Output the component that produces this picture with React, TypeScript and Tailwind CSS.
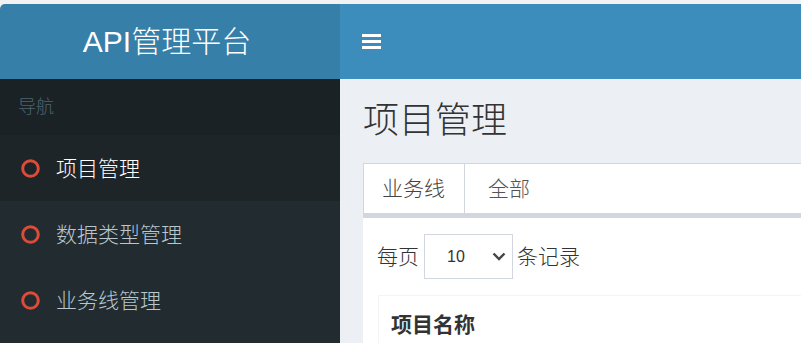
import React from "react";

const cjk = { fontFamily: '"Liberation Sans", "Noto Sans CJK SC", sans-serif' };

function CircleIcon() {
  return (
    <svg width="19" height="19" viewBox="0 0 19 19" className="shrink-0">
      <circle cx="9.5" cy="9.5" r="7.8" fill="none" stroke="#dd4b39" strokeWidth="3" />
    </svg>
  );
}

function MenuItem({ label, active }: { label: string; active?: boolean }) {
  return (
    <div
      className={`h-[66px] flex items-center pl-[21px] ${active ? "bg-[#1e2529] text-white" : "bg-[#222b30] text-[#b8c7ce]"}`}
    >
      <CircleIcon />
      <span className="ml-[16px] text-[21px] leading-none">{label}</span>
    </div>
  );
}

export default function App() {
  return (
    <div className="w-[801px] h-[343px] overflow-hidden bg-[#f2f2f2] pt-[4px] font-light" style={cjk}>
      <div className="flex h-[75px]">
        <div className="w-[340px] bg-[#367fa9] rounded-tl-[5px] flex items-center justify-center pr-[6px] text-white text-[30px] leading-none">
          API管理平台
        </div>
        <div className="flex-1 bg-[#3c8dbc] flex items-center pl-[22px]">
          <div className="flex flex-col gap-[3px] w-[19px] mt-[-1px]">
            <div className="h-[3px] bg-white" />
            <div className="h-[3px] bg-white" />
            <div className="h-[3px] bg-white" />
          </div>
        </div>
      </div>
      <div className="flex h-[264px]">
        <div className="w-[340px] bg-[#222b30] shrink-0">
          <div className="h-[56px] bg-[#1b2226] flex items-center pl-[18px] text-[18px] text-[#4b646f]">导航</div>
          <MenuItem label="项目管理" active />
          <MenuItem label="数据类型管理" />
          <MenuItem label="业务线管理" />
        </div>
        <div className="flex-1 bg-[#ecf0f5] pl-[23px] pt-[22px]">
          <h1 className="text-[36px] leading-[40px] text-[#333]">项目管理</h1>
          <div className="mt-[22px] bg-white">
            <div className="flex h-[50px] border-t border-l border-[#d2d6de] text-[21px]">
              <div className="w-[101px] border-r border-[#d2d6de] flex items-center pl-[18px] text-[#444]">业务线</div>
              <div className="flex items-center pl-[23px] text-[#555]">全部</div>
            </div>
            <div className="h-[5px] bg-[#d2d6de]" />
            <div className="pl-[14px] pt-[16px] h-[200px]">
              <div className="flex items-center text-[21px] text-[#333]">
                <span>每页</span>
                <div className="ml-[5px] w-[89px] h-[45px] border border-[#d2d6de] flex items-center pl-[22px] pr-[6px] justify-between">
                  <span className="text-[16px] text-[#333] font-normal" style={{ fontFamily: '"Liberation Sans", sans-serif' }}>10</span>
                  <svg width="14" height="9" viewBox="0 0 14 9">
                    <polyline points="1.5,1.5 7,7 12.5,1.5" fill="none" stroke="#444" strokeWidth="2.4" />
                  </svg>
                </div>
                <span className="ml-[4px]">条记录</span>
              </div>
              <div className="mt-[16px] ml-[1px] border-t border-l border-[#f4f4f4] h-[60px] flex items-start pt-[13px] pl-[12px]">
                <span className="text-[21px] font-bold text-[#333]">项目名称</span>
              </div>
            </div>
          </div>
        </div>
      </div>
    </div>
  );
}
